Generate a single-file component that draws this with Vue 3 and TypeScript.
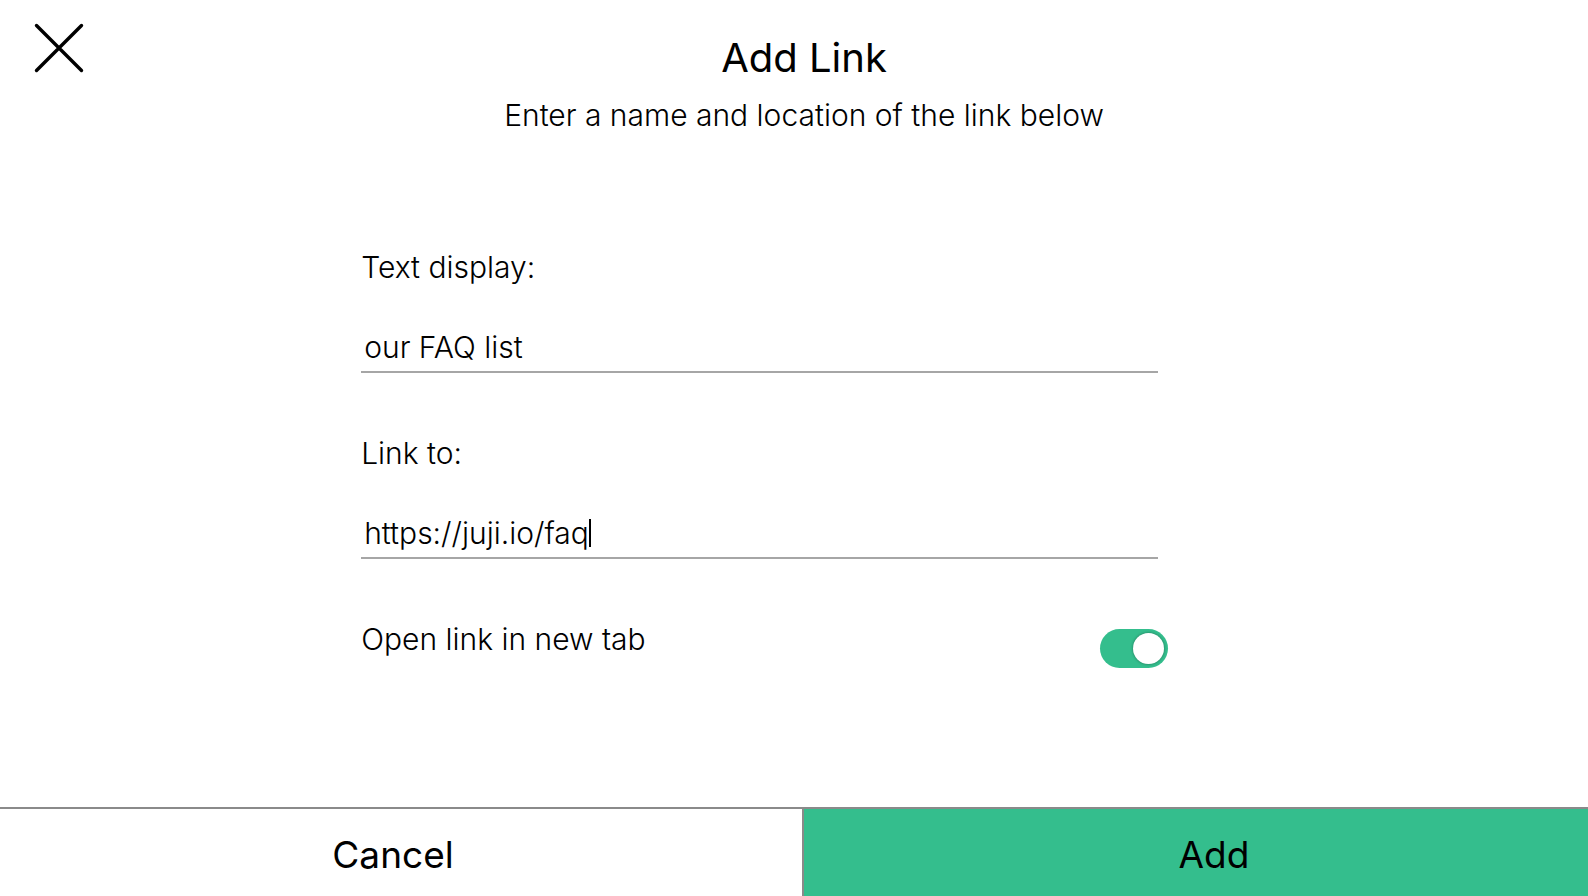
<script setup lang="ts">
import { ref } from 'vue'

const textDisplay = ref('our FAQ list')
const linkTo = ref('https://juji.io/faq')
const newTab = ref(true)
</script>

<template>
  <main class="dialog">
    <button class="close" type="button" aria-label="Close">
      <svg viewBox="0 0 50 50" width="50" height="50" aria-hidden="true">
        <path d="M2.5 2.5 47.5 47.5M47.5 2.5 2.5 47.5" fill="none" stroke="#000" stroke-width="3.4" stroke-linecap="round" />
      </svg>
    </button>

    <header class="heading">
      <h1>Add Link</h1>
      <p>Enter a name and location of the link below</p>
    </header>

    <form id="link-form" class="form" @submit.prevent>
      <div class="field">
        <label for="text-display">Text display:</label>
        <div class="line">
          <input id="text-display" v-model="textDisplay" type="text" />
        </div>
      </div>
      <div class="field">
        <label for="link-to">Link to:</label>
        <div class="line">
          <input id="link-to" v-model="linkTo" type="text" />
          <span class="caret"></span>
        </div>
      </div>
      <div class="option">
        <label for="new-tab">Open link in new tab</label>
        <input id="new-tab" v-model="newTab" class="toggle" type="checkbox" role="switch" />
      </div>
    </form>

    <footer class="actions">
      <button class="cancel" type="button">Cancel</button>
      <button class="add" type="submit" form="link-form">Add</button>
    </footer>
  </main>
</template>

<style>
body {
  margin: 0;
  overflow: hidden;
  background: #fff;
}
</style>

<style scoped>
.dialog {
  display: flex;
  flex-direction: column;
  min-height: 100vh;
  margin: 0 -36px 0 -16px;
  color: #000;
  font-family: Inter, "Liberation Sans", sans-serif;
  font-size: 30px;
  font-weight: 300;
  line-height: 40px;
}

button,
input {
  margin: 0;
  padding: 0;
  border: 0;
  border-radius: 0;
  background: none;
  color: inherit;
  font: inherit;
}

.close {
  position: absolute;
  top: 23px;
  left: 34px;
  width: 50px;
  height: 50px;
}

.close svg {
  display: block;
}

.heading {
  padding-top: 34px;
  text-align: center;
}

h1 {
  margin: 0;
  font-size: 40px;
  font-weight: 400;
  line-height: 48px;
}

p {
  margin: 13px 0 0;
}

.form {
  width: 48.6%;
  margin: 112px 0 0 23%;
}

.field {
  margin-bottom: 60px;
}

label {
  display: block;
}

.line {
  display: flex;
  align-items: center;
  margin-top: 32px;
  padding: 8px 3px 4px;
  border-bottom: 2px solid #a6a6a6;
}

.line input {
  field-sizing: content;
  height: 40px;
  outline: none;
}

.caret {
  width: 2px;
  height: 28px;
  background: #000;
}

.option {
  display: flex;
  justify-content: space-between;
  align-items: flex-start;
  margin-right: -10px;
}

.toggle {
  appearance: none;
  display: flex;
  width: 68px;
  height: 39px;
  margin-top: 10px;
  padding: 4px;
  box-sizing: border-box;
  border-radius: 20px;
  background: #c8c8c8;
}

.toggle::before {
  content: "";
  width: 31px;
  height: 31px;
  border-radius: 50%;
  background: #fff;
  box-shadow: 0 0 3px rgba(0, 0, 0, 0.4);
}

.toggle:checked {
  justify-content: flex-end;
  background: #34be8d;
}

.actions {
  display: grid;
  grid-template-columns: 1fr 1fr;
  margin-top: auto;
  border-top: 2px solid #8a8a8a;
}

.actions button {
  height: 87px;
  padding-top: 4px;
  font-size: 37px;
  font-weight: 400;
}

.actions .cancel {
  border-right: 2px solid #8a8a8a;
}

.actions .add {
  background: #34be8d;
}
</style>
